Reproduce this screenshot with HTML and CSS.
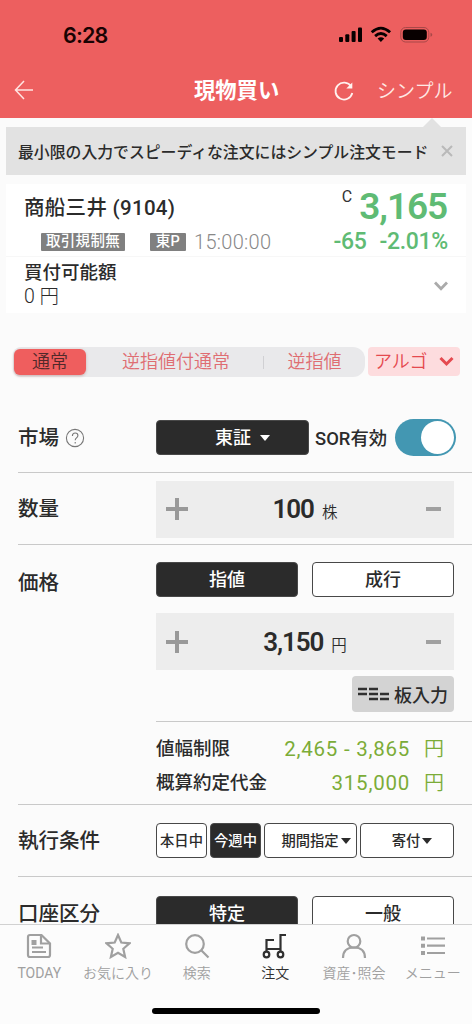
FILE: index.html
```html
<!DOCTYPE html>
<html lang="ja">
<head>
<meta charset="utf-8">
<title>現物買い</title>
<link rel="stylesheet" href="styles.css">
</head>
<body>
<div class="app">
  <header class="header">
    <div class="status">
      <span class="clock">6:28</span>
      <svg class="status-icons" width="96" height="18" viewBox="0 0 96 18">
        <g fill="#080000"><rect x="1" y="11" width="4" height="5" rx="1"/><rect x="7.300" y="8.300" width="4" height="7.700" rx="1"/><rect x="13.600" y="5" width="4" height="11" rx="1"/><rect x="20" y="1.500" width="4" height="14.500" rx="1"/></g>
        <g fill="none" stroke="#080000" stroke-width="2.800"><path d="M33.700 6.300Q42.900-2 52.100 6.300"/><path d="M37.100 10.100Q42.900 4.900 48.700 10.100"/></g>
        <path d="M39.600 12.500q3.300-2.600 6.600 0L42.900 16z" fill="#080000"/>
        <rect x="62.800" y="1.500" width="28" height="14.500" rx="4.800" fill="none" stroke="#a94848"/><rect x="64.800" y="3.500" width="24" height="10.500" rx="3" fill="#080000"/><path d="M92.500 6.800v4q1.800-.6 1.800-2t-1.800-2" fill="#a94848"/>
      </svg>
    </div>
    <div class="titlebar">
      <svg class="back" width="20" height="20" viewBox="0 0 20 20"><path d="M19 10H1.500M10 1 1.500 10l8.500 9"/></svg>
      <h1>現物買い</h1>
      <svg class="reload" width="22" height="22" viewBox="0 0 22 22"><path d="M18.200 5.500A8.500 8.500 0 1 0 19.300 12"/><path class="tip" d="M13.300 7.500h6V1.500z"/></svg>
      <span class="simple">シンプル</span>
    </div>
  </header>
  <div class="notice"><span>最小限の入力でスピーディな注文にはシンプル注文モード</span>
    <svg width="12" height="12" viewBox="0 0 12 12"><path d="m1 1 10 10M11 1 1 11"/></svg>
  </div>
  <section class="card">
    <div class="stock">
      <div class="stock-name">商船三井 <span>(9104)</span></div>
      <div class="tags"><b class="tag rule">取引規制無</b><b class="tag tse">東P</b><time>15:00:00</time></div>
      <div class="quote"><sup>C</sup><strong>3,165</strong></div>
      <div class="change"><span>-65</span><span>-2.01%</span></div>
    </div>
    <div class="power">
      <div><b>買付可能額</b><span><i>0</i> 円</span></div>
      <svg width="14" height="10" viewBox="0 0 14 10"><path d="m1 1.500 6 6.200 6-6.200"/></svg>
    </div>
  </section>
  <div class="modes">
    <div class="segments"><span class="on">通常</span><span class="stop-normal">逆指値付通常</span><span class="stop">逆指値</span></div>
    <div class="algo">アルゴ<svg width="15" height="11" viewBox="0 0 15 11"><path d="m1.500 2 6 6 6-6"/></svg></div>
  </div>
  <main class="form">
    <div class="row market">
      <label>市場<svg width="20" height="20" viewBox="0 0 20 20"><circle cx="10" cy="10" r="8.600"/><path d="M7.400 8q0-3 2.800-3 2.700 0 2.700 2.500 0 1.300-1.400 2.400-1.300 1-1.300 2.400M10.200 14v1.500"/></svg></label>
      <div class="field"><div class="btn dark exchange">東証<i class="caret"></i></div><b class="sor">SOR有効</b><div class="toggle"></div></div>
    </div>
    <div class="row quantity">
      <label>数量</label>
      <div class="stepper"><i class="plus"></i><div><b>100</b>株</div><i class="minus"></i></div>
    </div>
    <div class="row price">
      <label>価格</label>
      <div class="price-body">
        <div class="pair"><div class="btn dark">指値</div><div class="btn">成行</div></div>
        <div class="stepper"><i class="plus"></i><div><b>3,150</b>円</div><i class="minus"></i></div>
        <div class="board"><svg width="32" height="14" viewBox="0 0 32 14"><path d="M0 2h9M0 7h9M11 2h9M11 7h9M11 12h9M22 7h9M22 12h9"/></svg>板入力</div>
        <div class="summary">
          <div><b>値幅制限</b><span>2,465 - 3,865</span><em>円</em></div>
          <div><b>概算約定代金</b><span>315,000</span><em>円</em></div>
        </div>
      </div>
    </div>
    <div class="row condition">
      <label>執行条件</label>
      <div class="terms"><div class="btn">本日中</div><div class="btn dark">今週中</div><div class="btn term">期間指定<i class="caret"></i></div><div class="btn open">寄付<i class="caret"></i></div></div>
    </div>
    <div class="row account">
      <label>口座区分</label>
      <div class="pair"><div class="btn dark">特定</div><div class="btn">一般</div></div>
    </div>
  </main>
  <nav class="nav">
    <div class="tabs">
      <div class="tab"><svg viewBox="0 0 26 26"><path d="M4 2h11.500L24 10.500V22q0 2-2 2H4q-2 0-2-2V4q0-2 2-2z"/><path d="M15 2v8.500h9M6 14.500h11M6 19h14"/><path class="solid" d="M5.500 7h5v5h-5z"/></svg><span class="today">TODAY</span></div>
      <div class="tab"><svg viewBox="0 0 26 26"><path d="m13 2 3.300 7.500 8.200.8-6.200 5.500 1.800 8.200L13 19.800 5.900 24l1.800-8.200-6.200-5.500 8.200-.8z"/></svg><span>お気に入り</span></div>
      <div class="tab"><svg viewBox="0 0 26 26"><circle cx="11" cy="11" r="8.800"/><path d="m17.500 17.500 7 7"/></svg><span>検索</span></div>
      <div class="tab active"><svg viewBox="0 0 26 26"><circle cx="4.500" cy="21.500" r="2.800"/><circle cx="18.500" cy="21.500" r="2.800"/><path d="M4.500 18.500V7H12M5 16h13.500M18.500 18.500V2H24"/></svg><span>注文</span></div>
      <div class="tab"><svg viewBox="0 0 26 26"><circle cx="13" cy="8.300" r="6.300"/><path d="M2 25C2 18 6 14.500 13 14.500S24 18 24 25"/></svg><span>資産･照会</span></div>
      <div class="tab"><svg viewBox="0 0 26 26"><path d="M1 5.500h4M1 12.700h4M1 20h4" stroke-width="4"/><path d="M7 5.500h18M7 12.700h18M7 20h18"/></svg><span class="menu">メニュー</span></div>
    </div>
    <div class="home"></div>
  </nav>
</div>
</body>
</html>
```
FILE: styles.css
```css
* { box-sizing: border-box; }
body { margin: 0; background: #fbfbfb; color: #2b2b2b; font-family: Roboto, "Noto Sans CJK JP", sans-serif; }
svg { display: block; flex: none; fill: none; }
i, em { font-style: normal; }
.app { width: 472px; height: 1024px; display: flex; flex-direction: column; overflow: hidden; }

.header { flex: none; height: 118px; background: #ed5f5f; color: #fff; }
.status { height: 62px; padding: 26px 38px 0 63px; display: flex; justify-content: space-between; }
.clock { font: 600 21.500px/18px Inter, sans-serif; color: #190303; letter-spacing: -.8px; }
.titlebar { height: 56px; display: grid; grid-template-columns: 20px 160px 139px 44px auto; align-items: center; padding-left: 14px; }
.back { stroke: #ffe5e2; stroke-width: 1.500; }
.titlebar h1 { grid-column: 3; margin: 2px 0 0; font-size: 21.300px; line-height: 30px; font-weight: 700; white-space: nowrap; }
.reload { margin-top: 3px; stroke: #fff2ef; stroke-width: 1.800; }
.reload .tip { fill: #fff2ef; stroke: none; }
.simple { margin-top: 3px; font-size: 19px; line-height: 28px; font-weight: 350; white-space: nowrap; color: #ffe9e5; }

.notice { flex: none; position: relative; height: 48px; margin: 9px 6px 0; padding: 0 13px 0 12px; background: #e2e2e2; display: flex; align-items: center; justify-content: space-between; font-size: 15.850px; font-weight: 500; white-space: nowrap; }
.notice::before { content: ""; position: absolute; top: -9px; right: 25px; border: solid transparent; border-width: 0 9px 9px; border-bottom-color: #e2e2e2; }
.notice svg { stroke: #b9b9b9; stroke-width: 2; }

.card { flex: none; margin: 9px 6px 0; height: 129px; background: #fff; }
.stock { height: 73px; border-bottom: 1px solid #f7f7f7; padding: 0 18px; display: grid; grid-template-columns: 1fr auto; grid-template-rows: 44px 28px; align-items: center; }
.stock-name { font-size: 20.500px; font-weight: 500; letter-spacing: .3px; white-space: nowrap; }
.tags { display: flex; align-items: center; grid-row: 2; padding: 0 0 1px 17px; }
.tag { height: 18px; background: #808080; color: #fff; border-radius: 1px; font-size: 14.500px; line-height: 17px; letter-spacing: .3px; font-weight: 500; text-align: center; }
.rule { width: 84px; }
.tse { width: 36px; margin-left: 25px; }
.tags time { margin-left: 8px; color: #888; font-size: 20px; font-weight: 300; letter-spacing: .3px; }
.quote { grid-column: 2; grid-row: 1; display: flex; justify-content: flex-end; color: #5fbb74; margin: 2px 1px 0 0; }
.quote sup { color: #333; font-size: 16px; line-height: 18px; margin: 3px 7px 0 0; }
.quote strong { font-size: 37px; line-height: 44px; font-weight: 600; letter-spacing: -1.100px; }
.change { grid-column: 2; display: flex; justify-content: flex-end; gap: 13px; font-size: 23px; line-height: 26px; font-weight: 500; color: #5fbb74; letter-spacing: -.3px; }
.power { height: 56px; padding: 4px 18px 0; display: flex; justify-content: space-between; }
.power b { display: block; font-size: 18.500px; line-height: 24px; font-weight: 500; }
.power span { display: block; font-size: 19.500px; line-height: 24px; font-weight: 300; }
.power svg { margin: 20px 0 0; stroke: #aaa; stroke-width: 2.800; }

.modes { flex: none; margin: 34px 12px 0 13px; display: flex; gap: 3px; font-weight: 350; font-size: 18px; line-height: 28px; white-space: nowrap; }
.segments { width: 352px; height: 30px; border-radius: 8px 12px 12px 8px; background: #e9e9eb; color: #df6d72; display: grid; grid-template-columns: 75px 176px 101px; align-items: center; text-align: center; }
.segments .on { height: 26px; margin: 0 2px 0 1px; background: #ef5e5e; color: #51292a; border-radius: 6px; line-height: 26px; box-shadow: 0 1px 3px #c8b0b0; }
.stop-normal { background: linear-gradient(#d0d0d3, #d0d0d3) right / 1px 13px no-repeat; }
.algo { width: 92px; height: 29px; background: #fddcde; border-radius: 4px; color: #e5494f; display: flex; align-items: center; padding-left: 6px; gap: 12px; line-height: 28px; }
.algo svg { stroke: #e5494f; stroke-width: 3; }

.form { flex: 1; min-height: 0; overflow: hidden; padding: 25px 0 0 18px; }
.row { display: flex; border-bottom: 1px solid #c9c9c9; }
.row > label { width: 138px; flex: none; display: flex; align-items: center; font-size: 20.500px; font-weight: 500; line-height: 34px; padding-top: 1px; }
.row > label svg { margin-left: 6px; stroke: #777; stroke-width: 1.100; }
.market { height: 71px; align-items: center; }
.field { display: flex; align-items: center; }
.btn { height: 35px; border: 1px solid #484848; border-radius: 4px; background: #fff; display: flex; align-items: center; justify-content: center; font-size: 18px; font-weight: 500; line-height: 30px; white-space: nowrap; }
.dark { background: #2b2b2b; color: #fff; }
.exchange { width: 153px; gap: 9px; padding: 1px 0 0 20px; }
.caret { border: solid transparent; border-width: 6px 5px 0; border-top-color: currentColor; }
.sor { margin-left: 6px; font-size: 18.400px; font-weight: 500; width: 80px; white-space: nowrap; }
.toggle { width: 61px; height: 37px; border-radius: 19px; background: #4397b2; display: flex; align-items: center; justify-content: flex-end; padding-right: 2px; }
.toggle::after { content: ""; width: 33px; height: 33px; border-radius: 50%; background: #fff; }
.quantity { height: 72px; align-items: center; }
.quantity .stepper { margin-top: 1px; }
.stepper { width: 298px; height: 57px; background: #ededed; display: grid; grid-template-columns: 42px 1fr 42px; align-items: center; justify-items: center; font-size: 15.500px; font-weight: 350; }
.stepper b { font-size: 26px; font-weight: 600; margin-right: 8px; letter-spacing: -1.100px; }
.plus { width: 22px; height: 22px; background: linear-gradient(#999, #999) center / 22px 4px no-repeat, linear-gradient(#999, #999) center / 4px 22px no-repeat; }
.minus { width: 15px; height: 4px; background: #a0a0a0; }
.price { height: 260px; padding-top: 17px; }
.price > label { align-self: flex-start; line-height: 40px; }
.price-body { flex: 1; }
.pair { display: flex; gap: 14px; }
.pair .btn { width: 142px; }
.price .stepper { margin-top: 16px; }
.board { width: 102px; height: 36px; margin: 6px 0 9px 196px; background: #d3d3d3; border-radius: 4px; display: flex; align-items: center; gap: 4px; padding-left: 6px; font-size: 18px; font-weight: 500; white-space: nowrap; }
.board svg { stroke: #303030; stroke-width: 2.500; }
.summary { border-top: 1px solid #c9c9c9; padding-top: 11px; }
.summary div { display: grid; grid-template-columns: 114px 140px 34px; height: 33.500px; line-height: 33px; font-size: 18.500px; white-space: nowrap; }
.summary b { font-weight: 500; }
.summary span { text-align: right; color: #7bac38; font-size: 20.500px; letter-spacing: .75px; }
.summary em { text-align: right; color: #7bac38; font-size: 20px; font-weight: 350; }
.condition { height: 72px; align-items: center; }
.terms { display: grid; grid-template-columns: 51px 51px 93px 94px; gap: 3px; }
.terms .btn { font-size: 14.300px; }
.terms .term { padding-left: 11px; gap: 2px; }
.terms .open { padding-left: 10px; gap: 2px; }
.account { padding-top: 19px; height: 80px; border: 0; }
.account > label { height: 35px; }

.nav { flex: none; height: 100px; border-top: 1px solid #d1d1d1; background: #fcfcfc; }
.tabs { display: grid; grid-template-columns: repeat(6, 1fr); height: 83px; color: #a0a0a0; }
.tab { display: flex; flex-direction: column; align-items: center; padding-top: 8px; font-size: 14px; line-height: 20px; font-weight: 350; white-space: nowrap; }
.tab svg { width: 26px; height: 26px; stroke: currentColor; stroke-width: 2.200; margin-bottom: 4px; }
.tab .today { font-weight: 400; }
.tab .solid { fill: currentColor; stroke: none; }
.tab.active { color: #303030; }
.home { width: 168px; height: 6px; border-radius: 3px; background: #000; margin: 0 auto; }
```
